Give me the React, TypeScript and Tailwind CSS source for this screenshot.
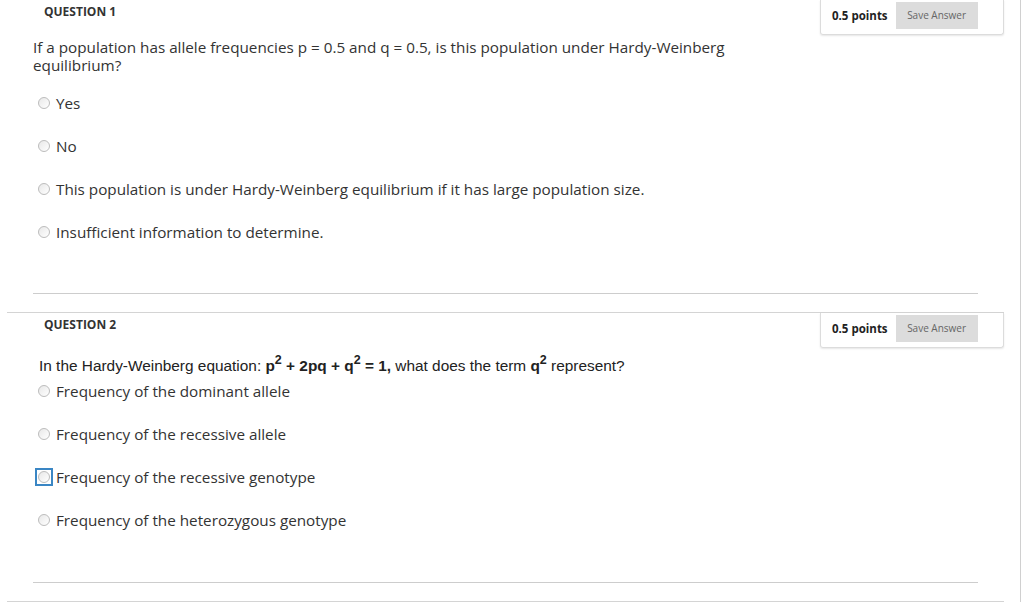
import React from "react";

type Option = { label: string; focused?: boolean };

const q1Options: Option[] = [
  { label: "Yes" },
  { label: "No" },
  {
    label:
      "This population is under Hardy-Weinberg equilibrium if it has large population size.",
  },
  { label: "Insufficient information to determine." },
];

const q2Options: Option[] = [
  { label: "Frequency of the dominant allele" },
  { label: "Frequency of the recessive allele" },
  { label: "Frequency of the recessive genotype", focused: true },
  { label: "Frequency of the heterozygous genotype" },
];

function Radio({ focused }: { focused?: boolean }) {
  return (
    <span
      className={
        "flex h-[18px] w-[18px] items-center justify-center " +
        (focused ? "border-2 border-[#3a86c4]" : "border-2 border-transparent")
      }
    >
      <span className="h-[12px] w-[12px] rounded-full border border-[#bcbcbc] bg-gradient-to-br from-[#e8e8e8] to-white" />
    </span>
  );
}

function OptionList({ options }: { options: Option[] }) {
  return (
    <ul className="flex flex-col gap-[23px]">
      {options.map((o) => (
        <li key={o.label} className="flex h-[20px] items-center pl-[2px]">
          <Radio focused={o.focused} />
          <span className="ml-[3px] text-[15.25px] leading-[20px] text-[#333]">
            {o.label}
          </span>
        </li>
      ))}
    </ul>
  );
}

function PointsBox() {
  return (
    <div className="flex h-[35px] w-[184px] items-start rounded-b-[3px] border-x border-b border-[#dcdcdc] pl-[11px] pt-[2px] shadow-[0_1px_2px_rgba(0,0,0,0.1)]">
      <div className="flex h-[27px] items-center gap-[8px]">
        <span className="text-[11.5px] font-bold text-[#222]">0.5 points</span>
        <button className="h-[27px] w-[82px] bg-[#dcdcdc] text-[10px] text-[#666]">
          Save Answer
        </button>
      </div>
    </div>
  );
}

function QuestionBlock({
  n,
  children,
}: {
  n: number;
  children?: React.ReactNode;
}) {
  return (
    <section className="ml-[7px] w-[997px] border-t border-[#d4d4d4]">
      <header className="flex items-start justify-between">
        <h2 className="pl-[37px] pt-[4px] text-[12px] font-bold leading-[16px] text-[#333]">
          QUESTION {n}
        </h2>
        <PointsBox />
      </header>
      {children}
    </section>
  );
}

function Sup({ children }: { children: React.ReactNode }) {
  return <span className="align-[7px] text-[12.5px] leading-[0]">{children}</span>;
}

export default function App() {
  return (
    <div
      className="min-h-screen w-[1021px] border-r border-[#d0d0d0] bg-white"
      style={{ fontFamily: '"Open Sans", "Liberation Sans", sans-serif' }}
    >
      <div className="-mt-px">
        <QuestionBlock n={1}>
          <div className="px-[26px] pb-[18px]">
            <p className="mt-[3px] w-[740px] text-[15.25px] leading-[18px] text-[#333]">
              If a population has allele frequencies p = 0.5 and q = 0.5, is this
              population under Hardy-Weinberg equilibrium?
            </p>
            <div className="mt-[19px]">
              <OptionList options={q1Options} />
            </div>
            <hr className="mt-[51px] border-t border-[#cdcdcd]" />
          </div>
        </QuestionBlock>

        <QuestionBlock n={2}>
          <div className="px-[26px] pb-[18px]">
            <p className="ml-[6px] mt-[8px] font-['Liberation_Sans',Arial,sans-serif] text-[15.4px] leading-[20px] text-[#222]">
              In the Hardy-Weinberg equation:{" "}
              <b>
                p<Sup>2</Sup> + 2pq + q<Sup>2</Sup> = 1,
              </b>{" "}
              what does the term{" "}
              <b>
                q<Sup>2</Sup>
              </b>{" "}
              represent?
            </p>
            <div className="mt-[5px]">
              <OptionList options={q2Options} />
            </div>
            <hr className="mt-[52px] border-t border-[#cdcdcd]" />
          </div>
        </QuestionBlock>

        <div className="ml-[7px] flex h-[40px] w-[997px] justify-end border-t border-[#d4d4d4]">
          <div className="w-[184px] border-l border-[#dcdcdc]" />
        </div>
      </div>
    </div>
  );
}
